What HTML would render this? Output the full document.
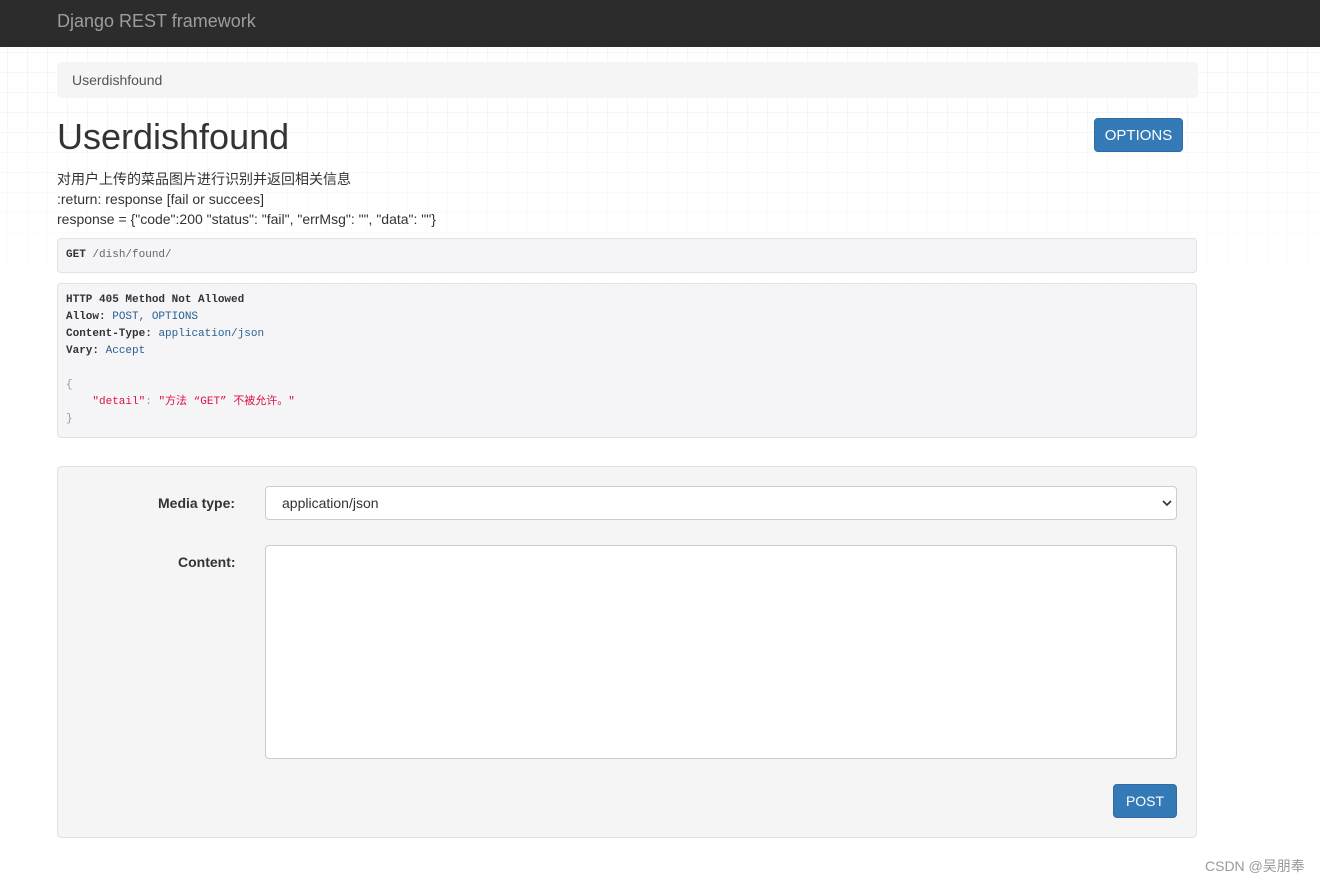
<!DOCTYPE html>
<html><head><meta charset="utf-8"><style>
*{box-sizing:border-box}
body{margin:0;width:1320px;height:882px;background:#fff;font-family:"Liberation Sans","Noto Sans CJK SC",sans-serif;font-size:14px;color:#333;position:relative;overflow:hidden}
.grid{position:absolute;left:0;top:47px;width:1320px;height:260px;background-image:linear-gradient(#f0f0f0 1px,transparent 1px),linear-gradient(90deg,#f0f0f0 1px,transparent 1px);background-size:20px 20px;background-position:7px 5px;-webkit-mask-image:linear-gradient(#000 30%,transparent);mask-image:linear-gradient(#000 30%,transparent);opacity:.6}
.nav{position:absolute;left:0;top:0;width:1320px;height:47px;background:#2c2c2c}
.nav span{position:absolute;left:57px;top:11px;font-size:18px;color:#9d9d9d}
.abs{position:absolute}
.bc{left:57px;top:62px;width:1141px;height:36px;background:#f5f5f5;border-radius:4px;padding:10px 15px;color:#555}
h1{position:absolute;left:57px;top:116px;margin:0;font-size:36px;font-weight:400;line-height:42px;color:#333}
.btn{position:absolute;background:#337ab7;border:1px solid #2e6da4;color:#fff;border-radius:4px;font-size:14px;text-align:center}
.desc{left:57px;top:169px;line-height:20px}
pre{margin:0;font-family:"Liberation Mono","Noto Sans CJK SC",monospace;font-size:11px;line-height:17px;background:#f5f5f7;border:1px solid #e1e1e8;border-radius:4px;color:#333}
b{font-weight:bold}
.blu{color:#286090}.red{color:#d14;}.gr{color:#999}
.form{left:57px;top:466px;width:1140px;height:372px;background:#f5f5f5;border:1px solid #e3e3e3;border-radius:4px}
label{position:absolute;font-weight:bold;color:#333}
.sel{position:absolute;left:265px;top:486px;width:912px;height:34px;background:#fff;border:1px solid #ccc;border-radius:4px;padding:8px 16px}
.ta{position:absolute;left:265px;top:545px;width:912px;height:214px;background:#fff;border:1px solid #ccc;border-radius:4px}
</style></head><body>
<div class="grid"></div>
<div class="nav"><span>Django REST framework</span></div>
<div class="abs bc">Userdishfound</div>
<h1>Userdishfound</h1>
<div class="btn" style="left:1094px;top:118px;width:89px;height:34px;line-height:33px;font-size:15px">OPTIONS</div>
<div class="abs desc">对用户上传的菜品图片进行识别并返回相关信息<br>:return: response [fail or succees]<br>response = {"code":200 "status": "fail", "errMsg": "", "data": ""}</div>
<pre class="abs" style="left:57px;top:238px;width:1140px;height:35px;padding:8px 8px"><b>GET</b> <span style="color:#666">/dish/found/</span></pre>
<pre class="abs" style="left:57px;top:283px;width:1140px;height:155px;padding:8px 8px"><b>HTTP 405 Method Not Allowed</b>
<b>Allow:</b> <span class="blu">POST, OPTIONS</span>
<b>Content-Type:</b> <span class="blu">application/json</span>
<b>Vary:</b> <span class="blu">Accept</span>

<span class="gr">{</span>
    <span class="red">"detail"</span><span class="gr">:</span> <span class="red">"方法 “GET” 不被允许。"</span>
<span class="gr">}</span></pre>
<div class="abs form"></div>
<label style="left:158px;top:495px">Media type:</label>
<div class="sel">application/json<svg style="position:absolute;right:4px;top:12px" width="10" height="8" viewBox="0 0 10 8"><path d="M1 2l4 4 4-4" stroke="#333" stroke-width="1.6" fill="none"/></svg></div>
<label style="left:178px;top:554px">Content:</label>
<div class="ta"></div>
<div class="btn" style="left:1113px;top:784px;width:64px;height:34px;line-height:32px">POST</div>
<div class="abs" style="left:1205px;top:856px;font-size:14px;color:#999">CSDN @吴朋奉</div>
</body></html>
